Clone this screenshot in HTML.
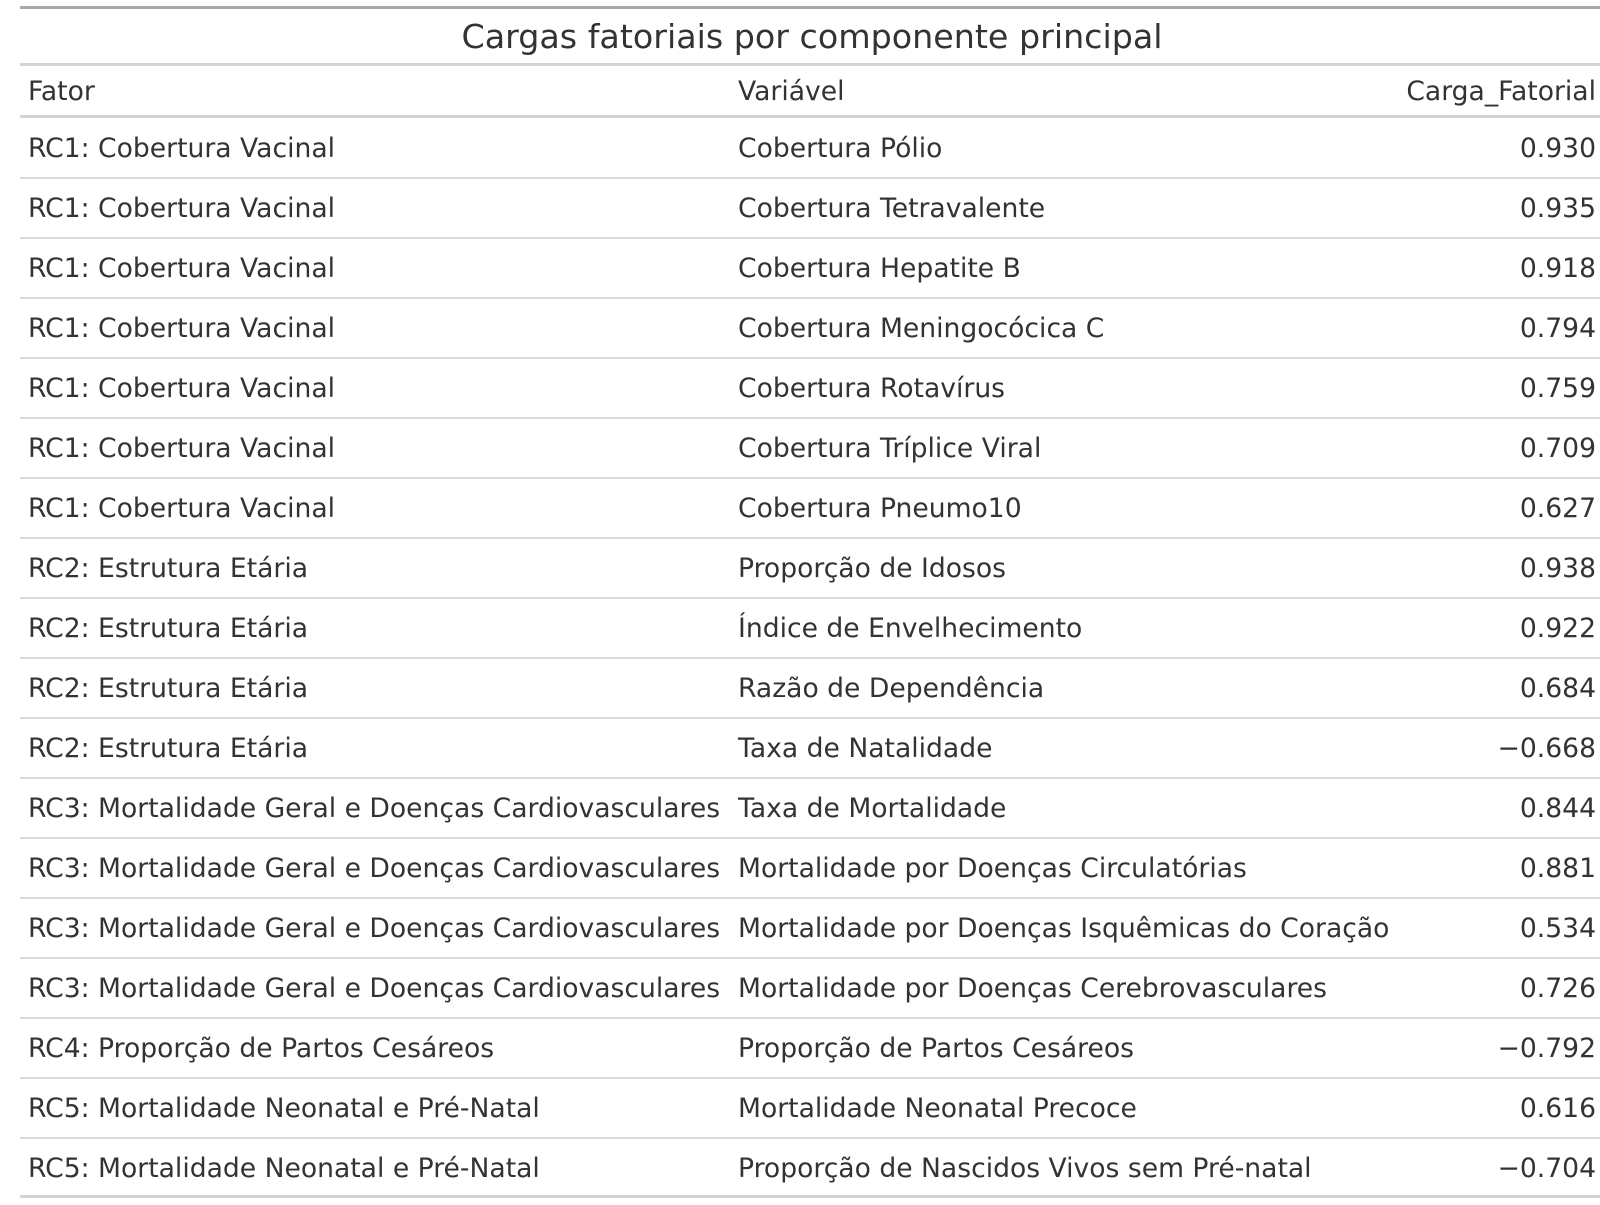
<!DOCTYPE html>
<html><head><meta charset="utf-8"><style>
body{margin:0;background:#fff;width:1600px;height:1205px;overflow:hidden;position:relative;font-family:"DejaVu Sans","Liberation Sans",sans-serif;color:#333}
.l{position:absolute;left:20px;width:1582px}
.t{position:absolute;white-space:nowrap;font-size:26.6px;line-height:30px}
</style></head><body>
<div class="l" style="top:6px;height:3px;background:#a8a8a8"></div>
<div class="t" style="left:21px;width:1582px;text-align:center;top:19px;font-size:33.3px;line-height:36px">Cargas fatoriais por componente principal</div>
<div class="l" style="top:63px;height:3px;background:#d3d3d3"></div>
<div class="t" style="left:28px;top:77px">Fator</div>
<div class="t" style="left:738px;top:77px">Variável</div>
<div class="t" style="right:4px;top:77px">Carga_Fatorial</div>
<div class="l" style="top:115px;height:3px;background:#d3d3d3"></div>
<div id="rows"></div>
<script>
var d=[["RC1: Cobertura Vacinal","Cobertura Pólio","0.930"],
["RC1: Cobertura Vacinal","Cobertura Tetravalente","0.935"],
["RC1: Cobertura Vacinal","Cobertura Hepatite B","0.918"],
["RC1: Cobertura Vacinal","Cobertura Meningocócica C","0.794"],
["RC1: Cobertura Vacinal","Cobertura Rotavírus","0.759"],
["RC1: Cobertura Vacinal","Cobertura Tríplice Viral","0.709"],
["RC1: Cobertura Vacinal","Cobertura Pneumo10","0.627"],
["RC2: Estrutura Etária","Proporção de Idosos","0.938"],
["RC2: Estrutura Etária","Índice de Envelhecimento","0.922"],
["RC2: Estrutura Etária","Razão de Dependência","0.684"],
["RC2: Estrutura Etária","Taxa de Natalidade","−0.668"],
["RC3: Mortalidade Geral e Doenças Cardiovasculares","Taxa de Mortalidade","0.844"],
["RC3: Mortalidade Geral e Doenças Cardiovasculares","Mortalidade por Doenças Circulatórias","0.881"],
["RC3: Mortalidade Geral e Doenças Cardiovasculares","Mortalidade por Doenças Isquêmicas do Coração","0.534"],
["RC3: Mortalidade Geral e Doenças Cardiovasculares","Mortalidade por Doenças Cerebrovasculares","0.726"],
["RC4: Proporção de Partos Cesáreos","Proporção de Partos Cesáreos","−0.792"],
["RC5: Mortalidade Neonatal e Pré-Natal","Mortalidade Neonatal Precoce","0.616"],
["RC5: Mortalidade Neonatal e Pré-Natal","Proporção de Nascidos Vivos sem Pré-natal","−0.704"]];
var h="";
for(var i=0;i<d.length;i++){
 var y=118+60*i, ty=y+16;
 h+='<div class="t" style="left:28px;top:'+ty+'px">'+d[i][0]+'</div>';
 h+='<div class="t" style="left:738px;top:'+ty+'px">'+d[i][1]+'</div>';
 h+='<div class="t" style="right:4px;top:'+ty+'px">'+d[i][2]+'</div>';
 if(i<d.length-1) h+='<div class="l" style="top:'+(y+59)+'px;height:2px;background:#d9d9d9"></div>';
}
h+='<div class="l" style="top:1195px;height:3px;background:#d3d3d3"></div>';
document.getElementById("rows").innerHTML=h;
</script>
</body></html>
